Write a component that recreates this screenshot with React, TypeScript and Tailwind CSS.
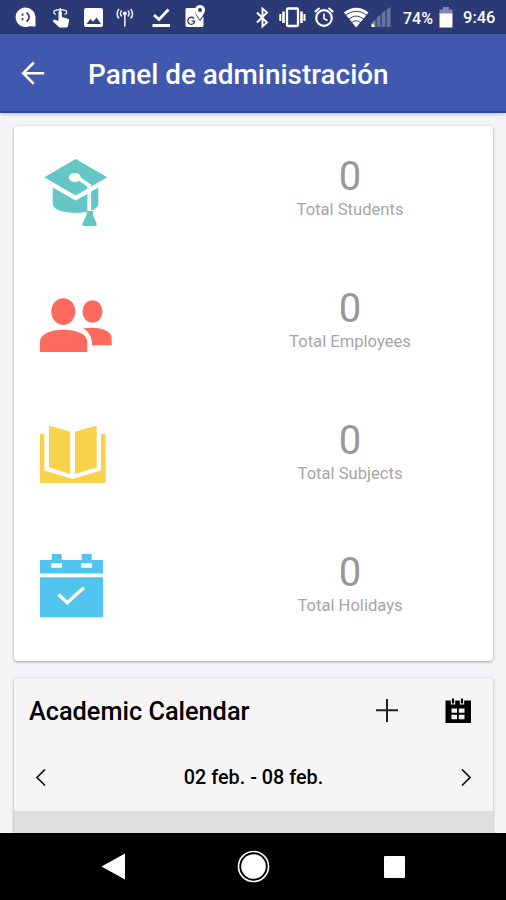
import type { ReactNode } from 'react'

type Stat = {
  label: string;
  value: number;
  icon: ReactNode;
}

function StudentsIcon() {
  return (
    <svg className="w-[120px] h-[132px]" viewBox="0 0 120 132" fill="#64c7c5">
      <path d="M38.7 61.5 61.7 74.5 84.3 61.5V78C84.3 83.5 73 87 61.5 87S38.7 83.5 38.7 78Z" />
      <path d="M61.7 33 93.3 51.3 61.7 69.5 30.3 51.3Z" />
      <ellipse cx="60.8" cy="51.6" rx="6" ry="4.6" fill="#fff" />
      <path d="M63 51.5 75.3 59.5V85" fill="none" stroke="#fff" strokeWidth="3.8" />
      <path d="M72.6 85h6.4v4l3.6 8.5c.6 1.4-.2 2.5-1.5 2.5H70c-1.3 0-2.1-1.1-1.5-2.5L72.6 89Z" />
    </svg>
  )
}

function EmployeesIcon() {
  return (
    <svg className="w-[120px] h-[132px]" viewBox="0 0 120 132" fill="#fd6a5e">
      <ellipse cx="49.3" cy="53.5" rx="12" ry="13.3" />
      <ellipse cx="78.5" cy="53.5" rx="10" ry="11.2" />
      <path d="M26 94V84C26 76 37 71.8 49.5 71.8S73.3 76 73.3 84V94Z" />
      <path d="M69 70.5C84 68 97.7 72 97.7 80V87.3H78C78 80 76 74 69 70.5Z" />
    </svg>
  )
}

function SubjectsIcon() {
  return (
    <svg className="w-[120px] h-[132px]" viewBox="0 0 120 132" fill="#f8d248">
      <path d="M35 35.5 56.2 41.8V84L35 77.3Z" />
      <path d="M82.7 35.5 61 41.8V84L82.7 77.3Z" />
      <path d="M26 44H30.3V80.5L58.5 89 87 80.5V44H91.7V93H26Z" />
    </svg>
  )
}

function HolidaysIcon() {
  return (
    <svg className="w-[120px] h-[132px]" viewBox="0 0 120 132" fill="#51c5ee">
      <path d="M26 38H37.7V32H47.7V38H67.7V32H77.7V38H89V51.5H26Z" />
      <path d="M26 55.3H89V95.3H26Z" />
      <path d="M37.3 41.3h10.7v4.4H37.3ZM67.3 41.3h10.7v4.4H67.3Z" fill="#fff" />
      <path d="M44.5 72.5 53.3 80.8 70 65.5" fill="none" stroke="#fff" strokeWidth="3.3" />
    </svg>
  )
}

const stats: Stat[] = [
  { label: 'Total Students', value: 0, icon: <StudentsIcon /> },
  { label: 'Total Employees', value: 0, icon: <EmployeesIcon /> },
  { label: 'Total Subjects', value: 0, icon: <SubjectsIcon /> },
  { label: 'Total Holidays', value: 0, icon: <HolidaysIcon /> },
]

function StatusBar() {
  return (
    <div className="flex h-[34px] shrink-0 items-center bg-[#2b3a75] text-white">
      {/* Notification icons */}
      <svg className="w-[210px] h-[34px]" viewBox="0 0 210 34" fill="#fff">
        <path d="M25.5 7.500a9.8 9.8 0 1 0 4 18.7L35.500 26.5V17A9.8 9.8 0 0 0 25.5 7.5Z" />
        <path d="M22.5 13.500v2.2M22.5 18v2.2M26.500 12.500c3.500 2.500 3.500 6.500 0 9" fill="none" stroke="#2b3a75" strokeWidth="1.7" />
        <path d="M58.5 12.5a1.7 1.7 0 0 1 3.4 0V17l6 1.8c1 .4 1.4 1 1.2 2L68 26c-.2.9-.8 1.4-1.7 1.4H60c-.6 0-1-.2-1.4-.6L52.500 21l1-1c.4-.4.9-.5 1.400-.3l3.600 1.300Z" />
        <path d="M56 14.5c-3-1-3-3.5 0-4.300 2.600-.8 6-.8 8.500 0 3 .8 3 3.300 0 4.300M60.300 8v3" fill="none" stroke="#fff" strokeWidth="1.3" />
        <rect x="84" y="8" width="19" height="19" rx="2" />
        <path d="M86.5 24 90.5 19 93 21.8 96.5 17.5 101 24Z" fill="#2b3a75" />
        <circle cx="124.8" cy="13.5" r="2" />
        <path d="M124.8 14V26.5M121.8 16.5a4 4 0 0 1 0-6M127.800 16.500a4 4 0 0 0 0-6M119 18.500a7 7 0 0 1 0-9.500M130.600 18.500a7 7 0 0 0 0-9.500" fill="none" stroke="#e8eaf5" strokeWidth="1.6" />
        <path d="M154 15 159 19.5 168.5 9.5" fill="none" stroke="#fff" strokeWidth="2.8" />
        <rect x="152.5" y="24" width="17.5" height="3" />
        <path d="M187 8h8.500c-1 5 1 8.500 4.500 13l3.500-4.500V25c0 1.400-.8 2-2 2H187.500c-1.300 0-2-.6-2-2V10c0-1.200.4-2 1.500-2Z" />
        <path d="M200 5c-3 0-5 2.200-5 5 0 3.600 5 9.500 5 9.500s5-5.900 5-9.500c0-2.800-2-5-5-5Zm0 3a2 2 0 1 1 0 4 2 2 0 0 1 0-4Z" fillRule="evenodd" />
        <path d="M194 18.500a3.500 3.500 0 1 0 .8 2.700H191.500" fill="none" stroke="#2b3a75" strokeWidth="1.3" />
      </svg>

      {/* System icons */}
      <svg className="ml-[40px] w-[145px] h-[34px]" viewBox="250 0 145 34" fill="none" stroke="#fff">
        <path d="M257 12.5 267 22.5 262.5 26.5V8.5L267 12.5 257 22.5" strokeWidth="1.9" />
        <rect x="287" y="8.5" width="11" height="17.5" rx="1" strokeWidth="2.3" />
        <path d="M283.5 11.500V23M301.500 11.500V23" strokeWidth="2.6" />
        <path d="M280.3 14V21M304.500 14V21" strokeWidth="2" />
        <circle cx="324" cy="18" r="7.8" strokeWidth="2.2" />
        <path d="M324 13.500V18.500L327.500 20.500" strokeWidth="1.6" />
        <path d="M314.800 12 319.500 8M333.200 12 328.500 8" strokeWidth="2" />
        <path d="M344 12.5C351 6 361.5 6 368.5 12.5L356.2 27.5Z" fill="#fff" stroke="none" />
        <path d="M345.5 15.5C352 10 360.5 10 367 15.5M348.500 19.500C353.500 15 359 15 364 19.500M351.500 23C354.500 20 358 20 361 23" stroke="#2b3a75" strokeWidth="1" />
        <path d="M371.5 27V23.5L375.5 19.5V27Z" fill="#7f88b1" stroke="none" />
        <path d="M376.7 27V18L380.500 14.500V27ZM381.700 27V13.500L385.500 10V27ZM386.700 27V9.500L390.500 7V27Z" fill="#69739f" stroke="none" />
        <path d="M371.5 27V24.500L373 23.500 375 27Z" fill="#fff" stroke="none" />
      </svg>
      <span className="ml-[8px] w-[36px] font-[Roboto] text-[16px] font-medium leading-none pt-[3px]">74%</span>
      <svg className="w-[14px] h-[34px]" viewBox="439 0 14 34">
        <path d="M443 7h6v2.500h3.500V15h-13V9.500H443Z" fill="#7f88b1" />
        <path d="M439.5 13.500h13V27.500h-13Z" fill="#fff" />
      </svg>
      <span className="ml-[10px] font-[Roboto] text-[16.5px] font-medium leading-none pt-[3px]">9:46</span>
    </div>
  )
}

function StatRow({ stat }: { stat: Stat }) {
  return (
    <div className="flex h-[132px]">
      <div className="w-[193px]">{stat.icon}</div>
      <div className="flex flex-1 flex-col items-center pt-[31px]">
        <span className="text-[40px] leading-[40px] text-[#979797]">{stat.value}</span>
        <span className="mt-[3px] text-[16.6px] leading-[20px] text-[#a6a6a6]">{stat.label}</span>
      </div>
    </div>
  )
}

export default function App() {
  return (
    <div className="flex h-[900px] w-[506px] flex-col overflow-hidden bg-[#f2f4f6] font-[Roboto,sans-serif]">
      <StatusBar />

      <header className="z-10 flex h-[79px] shrink-0 items-center border-b-2 border-[#2c4a94] bg-[#4058ad] text-white shadow-[0_1px_4px_rgba(0,0,0,0.25)]">
        <svg className="ml-[20px] mt-[1px] w-[26px] h-[26px]" viewBox="0 0 26 26" fill="none" stroke="#fff" strokeWidth="2.6">
          <path d="M24.2 13.2H3.5M13.8 2.5 3.2 13.2 13.8 23.9" />
        </svg>
        <h1 className="ml-[42px] text-[27.9px] font-medium leading-none pt-[4px]">Panel de administración</h1>
      </header>

      <main className="flex flex-1 flex-col gap-[17px] overflow-hidden px-[14px] pt-[13px]">
        <section className="h-[535px] w-[479px] shrink-0 rounded-[4px] bg-white shadow-[0_1px_3px_rgba(0,0,0,0.35)]">
          {stats.map((stat) => (
            <StatRow key={stat.label} stat={stat} />
          ))}
        </section>

        {/* Academic calendar */}
        <section className="w-[479px] rounded-t-[4px] bg-[#f5f5f5] text-black shadow-[0_1px_3px_rgba(0,0,0,0.35)]">
          <div className="flex h-[66px] items-center pl-[15px]">
            <h2 className="w-[346px] text-[25.3px] font-medium leading-none pt-[2px]">Academic Calendar</h2>
            <svg className="w-[24px] h-[24px]" viewBox="0 0 24 24" fill="none" stroke="#222" strokeWidth="2">
              <path d="M12 0V23M1 11.2H23" />
            </svg>
            <svg className="ml-[45px] w-[28px] h-[28px]" viewBox="0 0 28 28">
              <path d="M1.5 3.5H27V26H1.5Z" fill="#000" />
              <path d="M9 2.500V7.500M18 2.500V7.500" stroke="#f5f5f5" strokeWidth="4.4" />
              <path d="M9 1.500V6.500M18 1.500V6.500" stroke="#000" strokeWidth="2.2" />
              <path d="M7.500 11.500h5.500v4.300H7.500ZM14.800 11.500h5.700v4.300H14.800ZM7.500 17.800h5.500v4.500H7.500ZM14.800 17.800h5.700v4.500H14.800Z" fill="#f5f5f5" />
            </svg>
          </div>
          <div className="flex h-[67px] items-center justify-between px-[21px]">
            <svg className="w-[12px] h-[18px]" viewBox="0 0 12 18" fill="none" stroke="#111" strokeWidth="1.7">
              <path d="M10 .5 2 8.500 10 16.500" />
            </svg>
            <span className="text-[19.8px] font-medium leading-none pt-[1px]">02 feb. - 08 feb.</span>
            <svg className="w-[12px] h-[18px]" viewBox="0 0 12 18" fill="none" stroke="#111" strokeWidth="1.7">
              <path d="M2 .5 10 8.500 2 16.500" />
            </svg>
          </div>
          <div className="h-[60px] bg-[#dedede]" />
        </section>
      </main>

      {/* Android navigation bar */}
      <nav className="z-10 flex h-[67px] shrink-0 items-center bg-black">
        <svg className="ml-[101px] w-[25px] h-[28px]" viewBox="0 0 25 28" fill="#fff">
          <path d="M24 .5V26.500L.5 13.500Z" />
        </svg>
        <svg className="ml-[111px] w-[34px] h-[34px]" viewBox="0 0 34 34">
          <circle cx="16.5" cy="16.5" r="15" fill="none" stroke="#fff" strokeWidth="1.6" />
          <circle cx="16.5" cy="16.5" r="12.3" fill="#fff" />
        </svg>
        <div className="ml-[113px] h-[22px] w-[21px] rounded-[1px] bg-white" />
      </nav>
    </div>
  )
}
